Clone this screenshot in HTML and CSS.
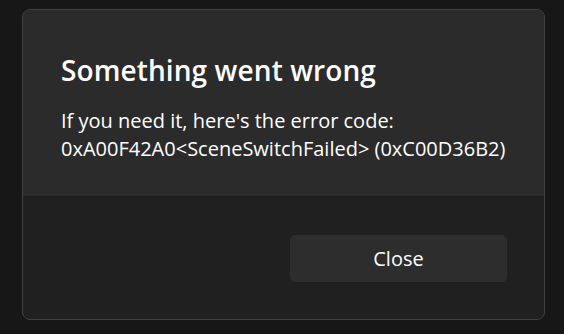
FILE: index.html
```html
<!DOCTYPE html>
<html>
<head>
<meta charset="utf-8">
<link rel="stylesheet" href="styles.css">
</head>
<body>
<div class="dialog">
  <div class="content">
    <h1 class="title">Something went wrong</h1>
    <p class="message">If you need it, here's the error code:<br>0xA00F42A0&lt;SceneSwitchFailed&gt; (0xC00D36B2)</p>
  </div>
  <div class="footer">
    <button class="btn">Close</button>
  </div>
</div>
</body>
</html>
```

FILE: styles.css
```css
html, body {
  margin: 0;
  padding: 0;
  background: #171717;
  width: 564px;
  height: 334px;
  overflow: hidden;
}
body {
  font-family: "Open Sans", "Noto Sans", sans-serif;
  color: #ffffff;
  padding: 9px 0 0 22px;
  box-sizing: border-box;
}
.dialog {
  width: 523px;
  height: 311px;
  box-sizing: border-box;
  border: 1px solid #424242;
  border-radius: 8px;
  overflow: hidden;
  display: flex;
  flex-direction: column;
  background: #202020;
}
.content {
  background: #2b2b2b;
  height: 187px;
  padding: 42px 38px 0 38px;
  box-sizing: border-box;
  border-bottom: 1px solid #1c1c1c;
}
.title {
  margin: 0;
  font-size: 28px;
  font-weight: 600;
  line-height: 36px;
  letter-spacing: 0.1px;
}
.message {
  margin: 19px 0 0 0;
  font-size: 20px;
  line-height: 28px;
  font-weight: 400;
}
.footer {
  flex: 1;
  display: flex;
  justify-content: flex-end;
  align-items: center;
  padding: 0 37px;
}
.btn {
  width: 217px;
  height: 47px;
  background: #2d2d2d;
  border: 1px solid #303030;
  border-radius: 5px;
  color: #ffffff;
  font-family: inherit;
  font-size: 20px;
  padding: 0;
}
```
